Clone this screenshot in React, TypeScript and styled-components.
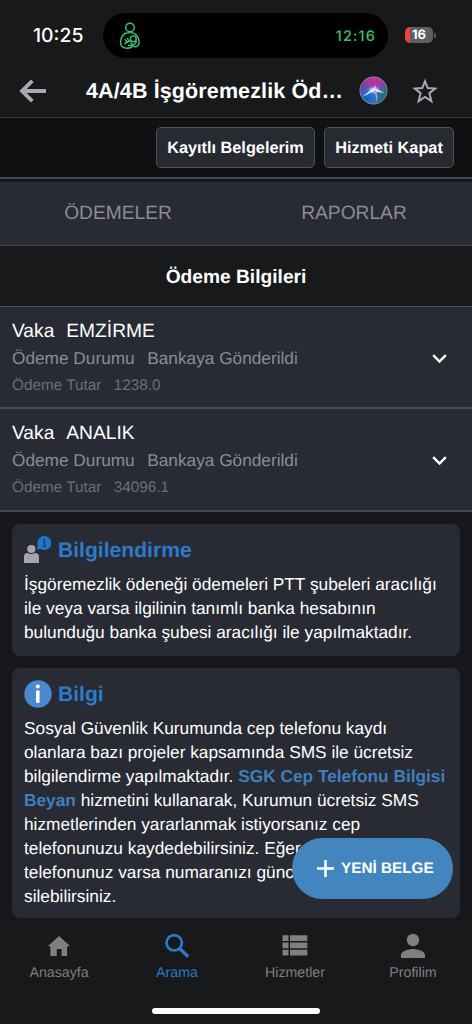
import React from "react";
import styled, { createGlobalStyle } from "styled-components";

const Global = createGlobalStyle`
  * { box-sizing: border-box; }
  body { margin: 0; background: #17181a; font-family: "Liberation Sans", Arial, sans-serif; text-rendering: geometricPrecision; }
  p, h1, h2, h3 { margin: 0; font-weight: 400; }
  button { font-family: inherit; text-rendering: inherit; }
`;

const Screen = styled.div`
  width: 472px;
  height: 1024px;
  display: flex;
  flex-direction: column;
  overflow: hidden;
  background: #15171a;
  color: #fff;
`;

const StatusBar = styled.div`
  height: 64px;
  flex: none;
  display: flex;
  align-items: flex-start;
  padding-top: 13px;
  background: #18191b;
  font-family: Inter, sans-serif;
`;
const Clock = styled.div`
  width: 103px;
  padding-left: 33px;
  line-height: 45px;
  font-size: 19.4px;
  font-weight: 500;
`;
const Island = styled.div`
  width: 285px;
  height: 45px;
  border-radius: 23px;
  background: #000;
  display: flex;
  align-items: center;
  justify-content: space-between;
  padding: 0 12px 0 16px;
`;
const CallTime = styled.span`
  color: #34c26a;
  font-size: 14.6px;
  font-weight: 500;
  letter-spacing: 1.1px;
`;
const Battery = styled.div`
  display: flex;
  align-items: center;
  margin: 14px 0 0 17px;
`;
const BatteryBody = styled.div`
  width: 28px;
  height: 16px;
  border-radius: 5px;
  background: linear-gradient(90deg, #ef4239 5px, #5d5e60 5px);
  font-size: 13px;
  line-height: 16px;
  font-weight: 700;
  text-align: center;
`;
const BatteryTip = styled.div`
  width: 2px;
  height: 5px;
  margin-left: 1px;
  border-radius: 0 2px 2px 0;
  background: #5d5e60;
`;

const Header = styled.header`
  height: 54px;
  flex: none;
  display: flex;
  align-items: center;
  padding: 0 34px 0 18px;
  background: #18191b;
  border-bottom: 1px solid #3a3b3d;
`;
const Title = styled.h1`
  flex: 1;
  margin-left: 39px;
  padding-top: 2px;
  font-size: 21.5px;
  font-weight: 700;
  letter-spacing: 0.12px;
  white-space: nowrap;
`;
const SiriIcon = styled.svg`margin-right: 24px;`;

const Actions = styled.div`
  height: 61px;
  flex: none;
  display: flex;
  justify-content: flex-end;
  align-items: flex-start;
  gap: 9px;
  padding: 9px 18px 0 0;
  background: #101112;
  border-bottom: 2px solid #48494b;
`;
const ActionButton = styled.button<{ $width: number }>`
  width: ${(p) => p.$width}px;
  height: 41px;
  padding: 2px 0 0;
  border: 1px solid #505256;
  border-radius: 5px;
  background: #272a31;
  color: #fff;
  font-size: 16.3px;
  font-weight: 700;
`;

const Tabs = styled.div`
  height: 64px;
  flex: none;
  margin-top: 3px;
  display: flex;
  background: #282b33;
  border-bottom: 1px solid #46494f;
`;
const Tab = styled.div`
  flex: 1;
  text-align: center;
  line-height: 64px;
  color: #8c8d91;
  font-size: 19.2px;
`;
const SectionTitle = styled.h2`
  height: 61px;
  flex: none;
  line-height: 63px;
  text-align: center;
  font-size: 19.2px;
  font-weight: 700;
  background: #17191b;
  border-bottom: 1px solid #505358;
`;

const Payment = styled.div`
  height: 102px;
  flex: none;
  display: flex;
  align-items: center;
  justify-content: space-between;
  padding: 3px 24px 0 12px;
  background: #282b33;
  border-bottom: 2px solid #464950;
  & + & { height: 103px; padding-top: 2px; }
`;
const Line = styled.div<{ $size: number; $color: string; $gap: number }>`
  display: flex;
  gap: ${(p) => p.$gap}px;
  line-height: 27.3px;
  font-size: ${(p) => p.$size}px;
  color: ${(p) => p.$color};
`;

const Cards = styled.div`
  display: flex;
  flex-direction: column;
  gap: 12px;
  padding: 12px 12px 0;
`;
const Card = styled.section<{ $height: number }>`
  height: ${(p) => p.$height}px;
  padding: 12px;
  border-radius: 8px;
  background: #282b33;
`;
const CardHead = styled.div`
  height: 28px;
  display: flex;
  align-items: center;
  gap: 6px;
`;
const CardTitle = styled.h3`
  padding-top: 2px;
  color: #2b7bca;
  font-size: 21.1px;
  font-weight: 700;
`;
const CardText = styled.p`
  margin-top: 8px;
  font-size: 17.29px;
  line-height: 24.05px;
  white-space: nowrap;
`;
const ServiceLink = styled.b`color: #417fbc;`;

const FloatingButton = styled.button`
  position: absolute;
  left: 292px;
  top: 838px;
  width: 161px;
  height: 61px;
  padding: 0 0 0 24px;
  border: 0;
  border-radius: 31px;
  background: #4385bf;
  color: #fff;
  display: flex;
  align-items: center;
  gap: 6px;
  font-size: 15.3px;
  font-weight: 700;
  white-space: nowrap;
`;

const BottomNav = styled.nav`
  flex: none;
  height: 106px;
  margin-top: auto;
  display: flex;
  flex-direction: column;
  align-items: center;
  background: #18191b;
`;
const NavRow = styled.div`
  width: 472px;
  height: 90px;
  display: flex;
`;
const NavItem = styled.div<{ $active?: boolean }>`
  flex: 1;
  display: flex;
  flex-direction: column;
  align-items: center;
  padding-top: 14px;
  color: ${(p) => (p.$active ? "#2b7bca" : "#7e7f80")};
  font-size: 14.2px;
  line-height: 16px;
  svg { margin-bottom: 5px; }
`;
const HomeBar = styled.div`
  width: 168px;
  height: 6px;
  border-radius: 3px;
  background: #fff;
`;

const NursingIcon = () => (
  <svg width="22" height="28" viewBox="0 0 22 28" fill="none" stroke="#3fc777" strokeWidth="1.4" strokeLinecap="round">
    <circle cx="11" cy="5.5" r="4.3" />
    <path d="M6.8 11.3C3.5 12 1.5 17 1.5 20.5c0 4 3 5.8 7 5.8 3 0 4.500-1 5.500-2" />
    <path d="M6.800 11.300c2-.9 6.500-.9 8.300 0 3.200 1.500 5.200 6 5 9.500-.2 3-2.500 4.400-4.600 3.800" />
    <circle cx="14.300" cy="16.800" r="2.900" />
    <path d="M11.800 19c-3 .2-5 1.200-6 2.800M6 17.700l2.500 2.500M8.500 16.500l1.500 2.800M9.500 23.200c3 .8 6.500-.7 8-3.600M12 21l3 3" />
  </svg>
);

const BackIcon = () => (
  <svg width="29" height="24" viewBox="0 0 29 24" fill="none" stroke="#a9a9b1" strokeWidth="3.800">
    <path d="M28 12H4M14.300 1.800L4 12l10.300 10.200" />
  </svg>
);

const Siri = () => (
  <SiriIcon width="29" height="29" viewBox="0 0 29 29">
    <defs>
      <linearGradient id="siriBase" x1="0" y1="0.300" x2="1" y2="0.700">
        <stop offset="0" stopColor="#5b3aa5" />
        <stop offset="0.5" stopColor="#3b6fc0" />
        <stop offset="1" stopColor="#167568" />
      </linearGradient>
      <radialGradient id="siriPink" cx="0.550" cy="0.050" r="0.580">
        <stop offset="0" stopColor="#d32c9b" />
        <stop offset="0.6" stopColor="#a638a0" stopOpacity="0.850" />
        <stop offset="1" stopColor="#a638a0" stopOpacity="0" />
      </radialGradient>
      <radialGradient id="siriBlue" cx="0.250" cy="0.800" r="0.450">
        <stop offset="0" stopColor="#1760b8" />
        <stop offset="1" stopColor="#2587dc" stopOpacity="0" />
      </radialGradient>
      <radialGradient id="siriGlow">
        <stop offset="0" stopColor="#fff" />
        <stop offset="0.350" stopColor="#c8ecff" stopOpacity="0.800" />
        <stop offset="1" stopColor="#7bb9ff" stopOpacity="0" />
      </radialGradient>
    </defs>
    <circle cx="14.500" cy="14.500" r="13.700" fill="url(#siriBase)" />
    <circle cx="14.500" cy="14.500" r="13.700" fill="url(#siriBlue)" />
    <circle cx="14.500" cy="14.500" r="13.700" fill="url(#siriPink)" stroke="#8d8495" strokeWidth="0.800" />
    <ellipse cx="15" cy="14" rx="7" ry="4.500" fill="url(#siriGlow)" />
    <path d="M3.500 20.500C7.500 18.500 10.500 14 14.500 12.500c4 .5 7 2.500 11 4.300-4-.5-7-1.300-9.500-1.800C12 15.200 9 19 3.500 20.500z" fill="#d9f6ff" />
    <path d="M14.800 14c1.500 4 2.600 7 2.700 12.500C19.400 22 18 18 16.200 14z" fill="#dc8be0" />
    <path d="M15 13l1.500-4.500.5 5z" fill="#eec8f5" />
  </SiriIcon>
);

const StarIcon = () => (
  <svg width="26" height="26" viewBox="0 0 26 26" fill="none" stroke="#a9a9b1" strokeWidth="2">
    <path d="M13 3.200l2.700 6.900 7.500.4-5.800 4.700 2 8-6.400-4.300-6.400 4.300 2-8-5.800-4.700 7.500-.4z" />
  </svg>
);

const Chevron = () => (
  <svg width="17" height="12" viewBox="0 0 17 12" fill="none" stroke="#fff" strokeWidth="2.400">
    <path d="M2.200 2.200l6.300 6.300 6.300-6.300" />
  </svg>
);

const NoticeIcon = () => (
  <svg width="28" height="28" viewBox="0 0 28 28">
    <circle cx="7.300" cy="13" r="4.100" fill="#a5a5aa" />
    <path d="M0 27v-6.500Q0 17 3.500 17Q7.300 19.200 11 17q4 0 4 3.500V27z" fill="#a5a5aa" />
    <circle cx="20.300" cy="7" r="7" fill="#1d78cd" />
    <path d="M14 7l-1 6.500 6-.8z" fill="#1d78cd" />
    <circle cx="20.300" cy="3.700" r="1" fill="#25354a" />
    <path d="M18.800 6h1.700v4.300M18.600 10.300h3.600" stroke="#25354a" strokeWidth="1.200" fill="none" />
  </svg>
);

const InfoIcon = () => (
  <svg width="28" height="28" viewBox="0 0 28 28">
    <circle cx="14" cy="14" r="13.700" fill="#4b89ce" />
    <circle cx="13.800" cy="6.600" r="2" fill="#fff" />
    <path d="M12 10.500h3.600v12.300h-3.600z" fill="#fff" />
  </svg>
);

const HomeIcon = () => (
  <svg width="26" height="28" viewBox="0 0 26 28" fill="currentColor">
    <path d="M13 4l11.300 10.300h-3.200V24h-5.500v-7h-4.800v7H4.400v-9.700H1.700z" />
  </svg>
);
const SearchIcon = () => (
  <svg width="26" height="28" viewBox="0 0 26 28" fill="none" stroke="currentColor" strokeWidth="2.700">
    <circle cx="10.200" cy="10.800" r="7.700" />
    <path d="M15.500 16.200l8.600 8.400" strokeWidth="3.400" />
  </svg>
);
const ListIcon = () => (
  <svg width="26" height="28" viewBox="0 0 26 28" fill="currentColor">
    <path d="M.5 3.300h6v5.800h-6zM8 3.300h17.300v5.800H8zM.5 10.500h6v5.800h-6zM8 10.500h17.300v5.800H8zM.5 17.700h6v5.800h-6zM8 17.700h17.300v5.800H8z" />
  </svg>
);
const PersonIcon = () => (
  <svg width="26" height="28" viewBox="0 0 26 28" fill="currentColor">
    <circle cx="13" cy="8" r="6.200" />
    <path d="M1 26v-3c0-4 8-6 12-6s12 2 12 6v3z" />
  </svg>
);

const payments = [
  { kind: "EMZİRME", status: "Bankaya Gönderildi", amount: "1238.0" },
  { kind: "ANALIK", status: "Bankaya Gönderildi", amount: "34096.1" },
];

export default function App() {
  return (
    <>
      <Global />
      <Screen>
        <StatusBar>
          <Clock>10:25</Clock>
          <Island>
            <NursingIcon />
            <CallTime>12:16</CallTime>
          </Island>
          <Battery>
            <BatteryBody>16</BatteryBody>
            <BatteryTip />
          </Battery>
        </StatusBar>
        <Header>
          <BackIcon />
          <Title>4A/4B İşgöremezlik Öd…</Title>
          <Siri />
          <StarIcon />
        </Header>
        <Actions>
          <ActionButton $width={159}>Kayıtlı Belgelerim</ActionButton>
          <ActionButton $width={130}>Hizmeti Kapat</ActionButton>
        </Actions>
        <Tabs>
          <Tab>ÖDEMELER</Tab>
          <Tab>RAPORLAR</Tab>
        </Tabs>
        <SectionTitle>Ödeme Bilgileri</SectionTitle>
        {payments.map((p) => (
          <Payment key={p.kind}>
            <div>
              <Line $size={19.2} $color="#fff" $gap={12}>
                <span>Vaka</span>
                <span>{p.kind}</span>
              </Line>
              <Line $size={17.25} $color="#8b8d91" $gap={12.5}>
                <span>Ödeme Durumu</span>
                <span>{p.status}</span>
              </Line>
              <Line $size={15.3} $color="#6d6f74" $gap={12.5}>
                <span>Ödeme Tutar</span>
                <span>{p.amount}</span>
              </Line>
            </div>
            <Chevron />
          </Payment>
        ))}
        <Cards>
          <Card $height={132}>
            <CardHead>
              <NoticeIcon />
              <CardTitle>Bilgilendirme</CardTitle>
            </CardHead>
            <CardText>
              İşgöremezlik ödeneği ödemeleri PTT şubeleri aracılığı
              <br />
              ile veya varsa ilgilinin tanımlı banka hesabının
              <br />
              bulunduğu banka şubesi aracılığı ile yapılmaktadır.
            </CardText>
          </Card>
          <Card $height={250}>
            <CardHead>
              <InfoIcon />
              <CardTitle>Bilgi</CardTitle>
            </CardHead>
            <CardText>
              Sosyal Güvenlik Kurumunda cep telefonu kaydı
              <br />
              olanlara bazı projeler kapsamında SMS ile ücretsiz
              <br />
              bilgilendirme yapılmaktadır. <ServiceLink>SGK Cep Telefonu Bilgisi</ServiceLink>
              <br />
              <ServiceLink>Beyan</ServiceLink> hizmetini kullanarak, Kurumun ücretsiz SMS
              <br />
              hizmetlerinden yararlanmak istiyorsanız cep
              <br />
              telefonunuzu kaydedebilirsiniz. Eğer
              <br />
              telefonunuz varsa numaranızı günc
              <br />
              silebilirsiniz.
            </CardText>
          </Card>
        </Cards>
        <BottomNav>
          <NavRow>
            <NavItem>
              <HomeIcon />
              Anasayfa
            </NavItem>
            <NavItem $active>
              <SearchIcon />
              Arama
            </NavItem>
            <NavItem>
              <ListIcon />
              Hizmetler
            </NavItem>
            <NavItem>
              <PersonIcon />
              Profilim
            </NavItem>
          </NavRow>
          <HomeBar />
        </BottomNav>
        <FloatingButton>
          <svg width="19" height="19" viewBox="0 0 19 19" stroke="#fff" strokeWidth="2.600">
            <path d="M9.500 1v17M1 9.500h17" />
          </svg>
          YENİ BELGE
        </FloatingButton>
      </Screen>
    </>
  );
}
